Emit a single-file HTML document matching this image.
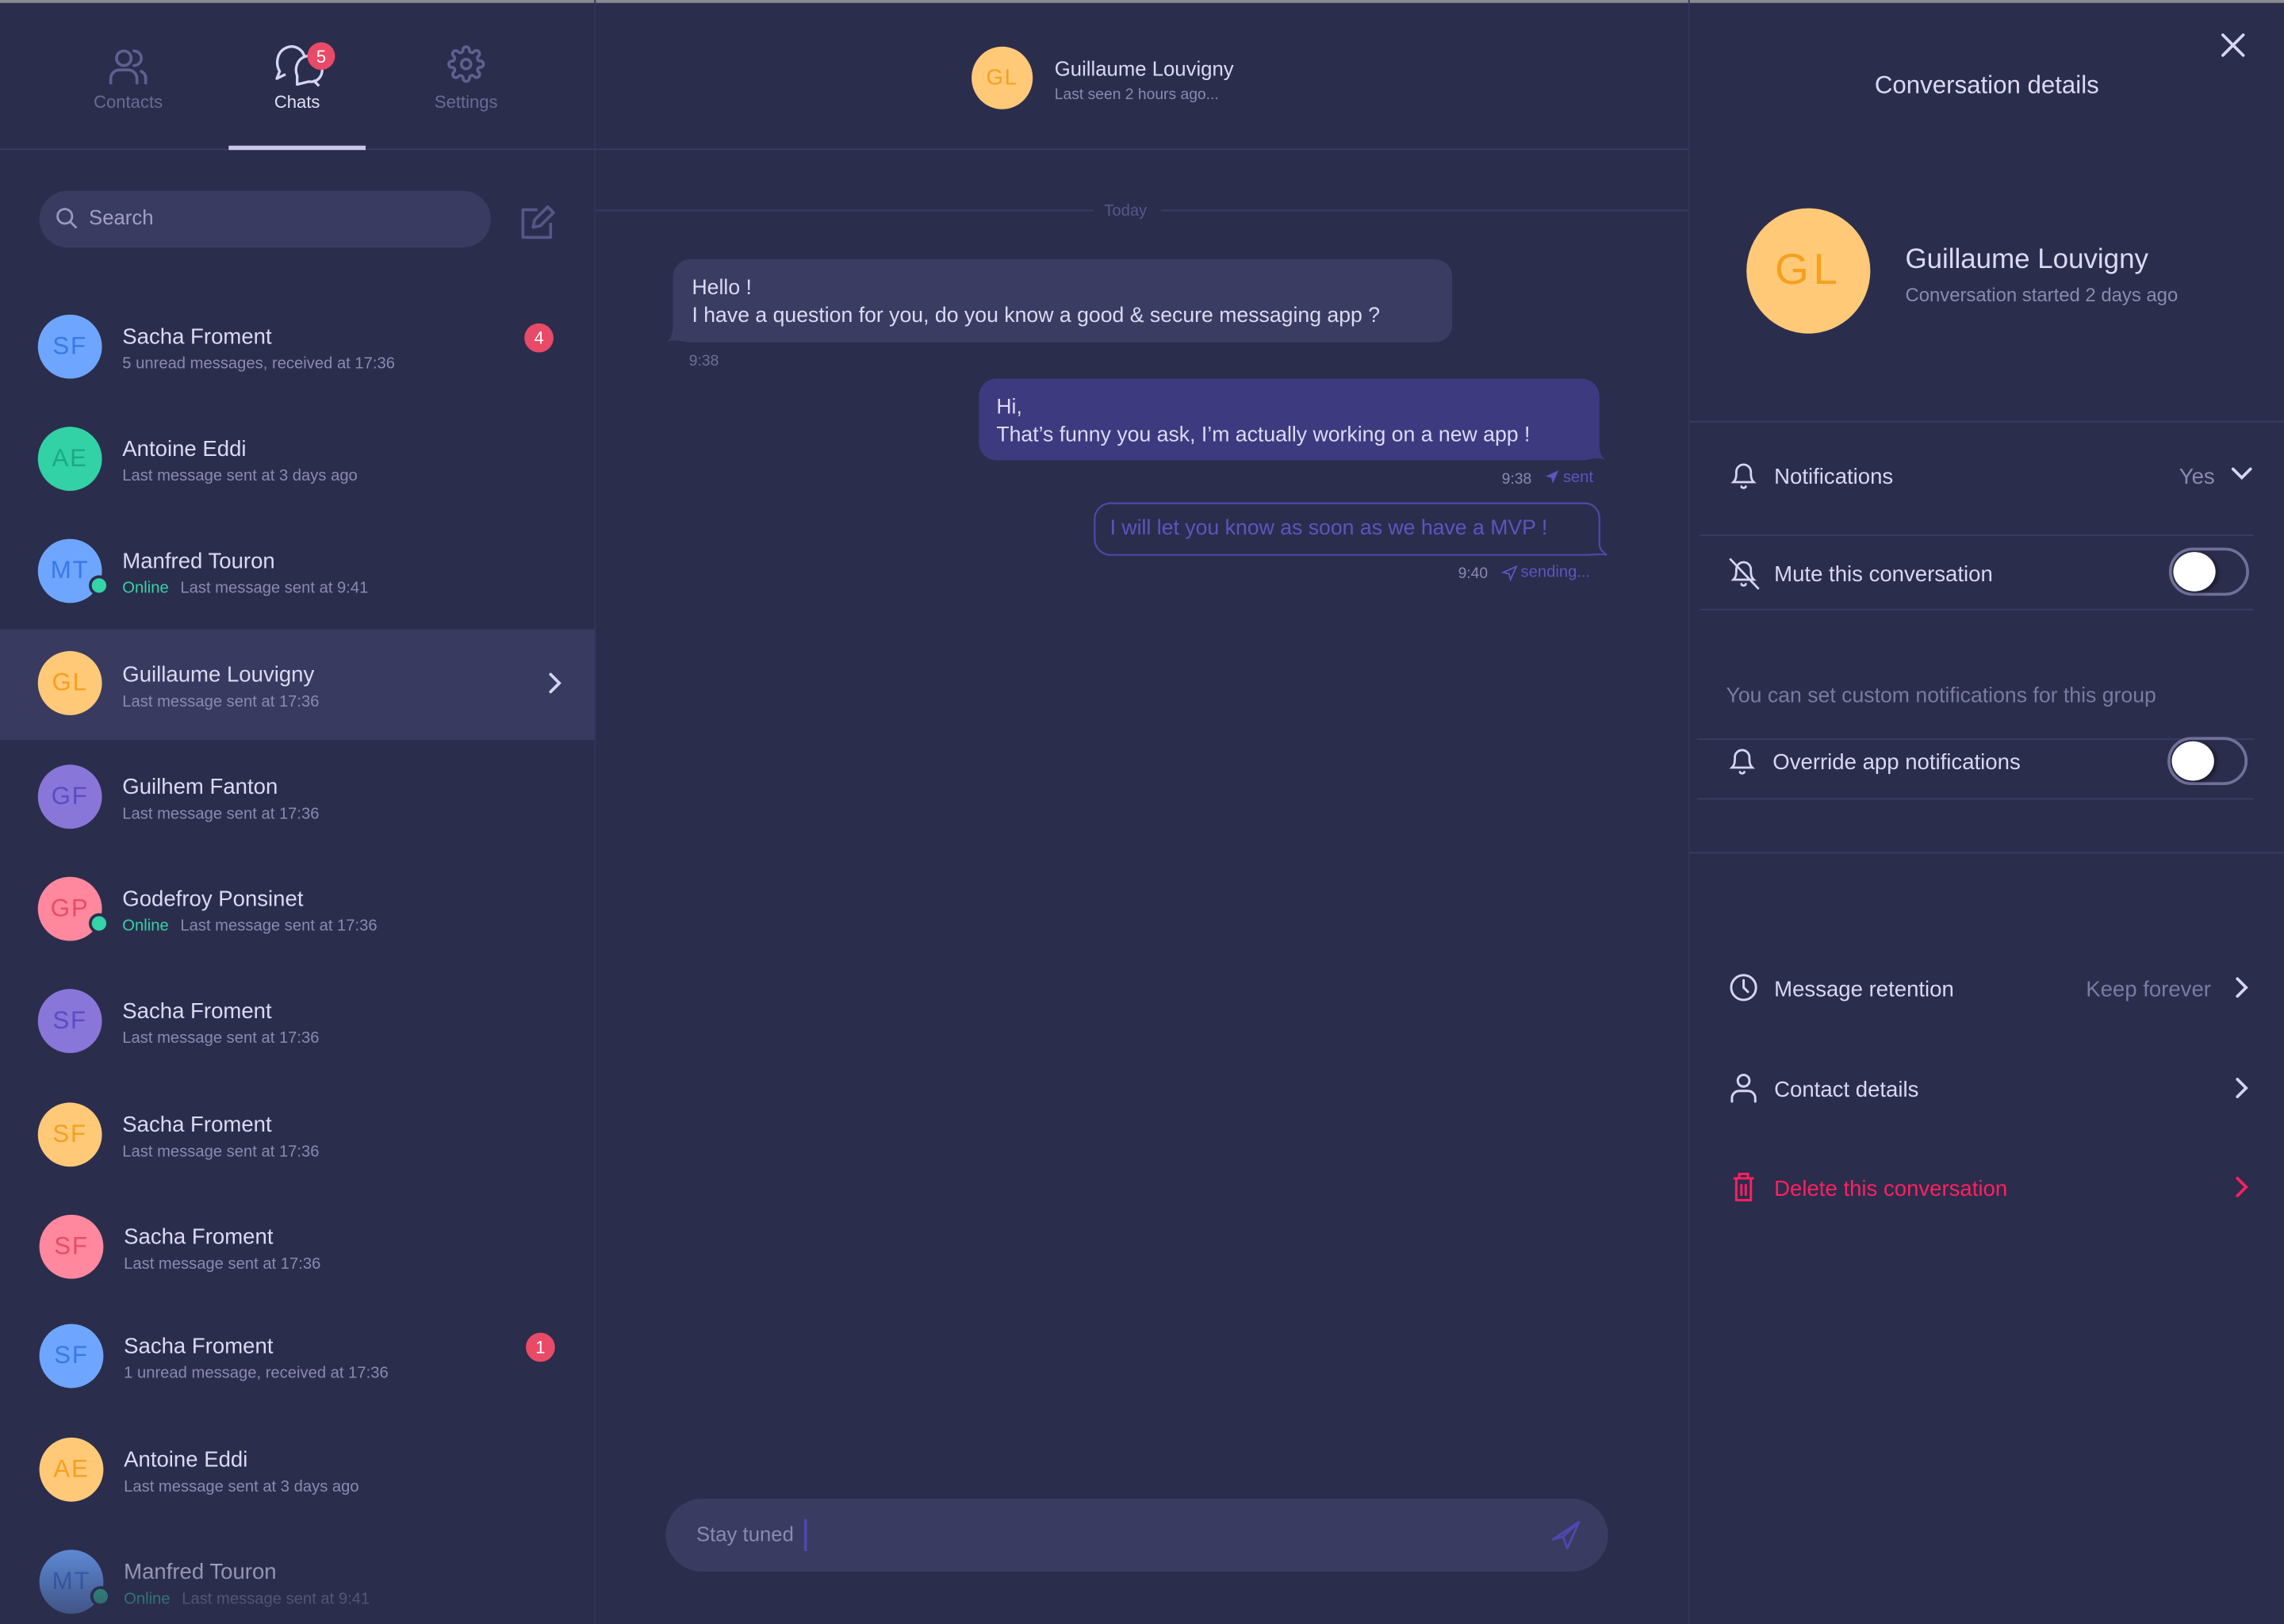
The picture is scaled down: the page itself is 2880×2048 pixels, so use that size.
<!DOCTYPE html>
<html><head><meta charset="utf-8"><style>
*{box-sizing:border-box;margin:0;padding:0}
html,body{width:2880px;height:2048px;overflow:hidden;background:#2b2d4c}
#s{position:absolute;left:0;top:0;width:1568px;height:1115px;transform:scale(1.836735,1.836771);transform-origin:0 0;font-family:"Liberation Sans",sans-serif;color:#d6d6f2;background:#2b2d4c}
.a{position:absolute}
.t{margin-top:2px}
.av{position:absolute;border-radius:50%;display:flex;align-items:center;justify-content:center;font-size:17px;letter-spacing:1px}
.nm{position:absolute;font-size:15px;color:#dadaf4;margin-top:2px}
.sb{position:absolute;font-size:11px;color:#8a8ab0;white-space:nowrap;margin-top:2px}
.on{color:#34d3a8;margin-right:8px}
.dot{position:absolute;width:14px;height:14px;border-radius:50%;background:#34d3a8;border:2px solid #2b2d4c}
.bd{position:absolute;width:20px;height:20px;border-radius:50%;background:#e84a68;color:#fff;font-size:12px;display:flex;align-items:center;justify-content:center}
.ln{position:absolute;height:1px;background:#3a3c63}
.lbl{position:absolute;font-size:15px;color:#d8d8f4;margin-top:2px}
.tg{position:absolute;width:55px;height:33px;border:2px solid #70709a;border-radius:17px}
.tg:after{content:"";position:absolute;left:1px;top:1px;width:29px;height:27px;border-radius:50%;background:#fff;box-shadow:2px 1px 3px rgba(0,0,0,.4)}
svg{position:absolute;overflow:visible}
</style></head><body><div id="s">
<div class="a" style="left:0;top:0;width:1568px;height:2px;background:#8a8a92"></div>
<div class="a" style="left:408px;top:0;width:1px;height:1115px;background:#34365a"></div>
<div class="a" style="left:1159px;top:0;width:1px;height:1115px;background:#34365a"></div>
<div class="ln" style="left:0;top:102px;width:1159px;background:#383a62"></div>

<!-- tabs -->
<svg style="left:74px;top:32px" width="28" height="26" viewBox="0 0 28 26" fill="none" stroke="#5f6090" stroke-width="2" stroke-linecap="round"><circle cx="11" cy="8" r="5"/><path d="M2 25v-3a6 6 0 0 1 6-6h6a6 6 0 0 1 6 6v3"/><path d="M18 3a5 5 0 0 1 0 10M23 17a5 5 0 0 1 3 5v3"/></svg>
<div class="a t" style="left:48px;top:61px;width:80px;text-align:center;font-size:12px;color:#6a6a96">Contacts</div>
<svg style="left:188px;top:30px" width="36" height="30" viewBox="0 0 36 30" fill="none" stroke="#d6d6f2" stroke-width="1.8" stroke-linejoin="round"><path d="M8 21 L2 24 L4 19 C1 14 2 6 8 3 C14 0 20 4 21 9"/><path d="M16 28 L24 26 C30 27 34 22 33 16 C32 10 26 7 21 9 C16 11 14 17 16 22 Z"/><path d="M27 25 L31 29"/></svg>
<div class="bd" style="left:211px;top:29px;width:19px;height:19px;font-size:12px">5</div>
<div class="a t" style="left:164px;top:61px;width:80px;text-align:center;font-size:12px;color:#e0e0f6">Chats</div>
<div class="a" style="left:157px;top:100px;width:94px;height:3px;background:#c8c8ec"></div>
<svg style="left:307px;top:31px" width="26" height="26" viewBox="0 0 24 24" fill="none" stroke="#5f6090" stroke-width="1.8"><circle cx="12" cy="12" r="3"/><path d="M19.4 15a1.7 1.7 0 0 0 .3 1.8l.1.1a2 2 0 1 1-2.8 2.8l-.1-.1a1.7 1.7 0 0 0-1.8-.3 1.7 1.7 0 0 0-1 1.5V21a2 2 0 1 1-4 0v-.1a1.7 1.7 0 0 0-1.1-1.5 1.7 1.7 0 0 0-1.8.3l-.1.1a2 2 0 1 1-2.8-2.8l.1-.1a1.7 1.7 0 0 0 .3-1.8 1.7 1.7 0 0 0-1.5-1H3a2 2 0 1 1 0-4h.1a1.7 1.7 0 0 0 1.5-1.1 1.7 1.7 0 0 0-.3-1.800l-.1-.1a2 2 0 1 1 2.8-2.8l.1.1a1.7 1.7 0 0 0 1.8.3H9a1.7 1.7 0 0 0 1-1.5V3a2 2 0 1 1 4 0v.1a1.7 1.7 0 0 0 1 1.5 1.7 1.7 0 0 0 1.8-.3l.1-.1a2 2 0 1 1 2.8 2.8l-.1.1a1.7 1.7 0 0 0-.3 1.8V9a1.7 1.7 0 0 0 1.5 1H21a2 2 0 1 1 0 4h-.1a1.7 1.7 0 0 0-1.5 1z"/></svg>
<div class="a t" style="left:280px;top:61px;width:80px;text-align:center;font-size:12px;color:#6a6a96">Settings</div>

<!-- search -->
<div class="a" style="left:27px;top:131px;width:310px;height:39px;border-radius:20px;background:#3a3b60"></div>
<svg style="left:38px;top:142px" width="16" height="16" viewBox="0 0 16 16" fill="none" stroke="#9a9ac0" stroke-width="1.5"><circle cx="6.5" cy="6.5" r="5"/><path d="M10.5 10.5L14.5 14.5"/></svg>
<div class="a" style="left:61px;top:141px;font-size:14px;color:#a0a0c4">Search</div>
<svg style="left:357px;top:140px" width="25" height="25" viewBox="0 0 25 25" fill="none" stroke="#55578a" stroke-width="2" stroke-linejoin="round"><path d="M12 4H2v19h19V13"/><path d="M9 16l1-5L19 2l4 4-9 9z"/></svg>

<!-- rows -->
<div class="a" style="left:0;top:432px;width:408px;height:76px;background:#393a60"></div>

<div class="av" style="left:26px;top:216px;width:44px;height:44px;background:#6ea6ff;color:#3a78e6">SF</div>
<div class="nm" style="left:84px;top:221px">Sacha Froment</div><div class="sb" style="left:84px;top:242px">5 unread messages, received at 17:36</div>
<div class="bd" style="left:360px;top:222px">4</div>

<div class="av" style="left:26px;top:293px;width:44px;height:44px;background:#32d2a6;color:#1ea884">AE</div>
<div class="nm" style="left:84px;top:298px">Antoine Eddi</div><div class="sb" style="left:84px;top:319px">Last message sent at 3 days ago</div>

<div class="av" style="left:26px;top:370px;width:44px;height:44px;background:#6ea6ff;color:#3a78e6">MT</div><div class="dot" style="left:61px;top:395px"></div>
<div class="nm" style="left:84px;top:375px">Manfred Touron</div><div class="sb" style="left:84px;top:396px"><span class="on">Online</span>Last message sent at 9:41</div>

<div class="av" style="left:26px;top:447px;width:44px;height:44px;background:#ffc978;color:#f5a01e">GL</div>
<div class="nm" style="left:84px;top:453px">Guillaume Louvigny</div><div class="sb" style="left:84px;top:474px">Last message sent at 17:36</div>
<svg style="left:376px;top:461px" width="10" height="16" viewBox="0 0 10 16" fill="none" stroke="#d6d6f2" stroke-width="2" stroke-linecap="round"><path d="M2 2l6 6-6 6"/></svg>

<div class="av" style="left:26px;top:525px;width:44px;height:44px;background:#8877d8;color:#5a4cc6">GF</div>
<div class="nm" style="left:84px;top:530px">Guilhem Fanton</div><div class="sb" style="left:84px;top:551px">Last message sent at 17:36</div>

<div class="av" style="left:26px;top:602px;width:44px;height:44px;background:#ff889e;color:#e84c68">GP</div><div class="dot" style="left:61px;top:627px"></div>
<div class="nm" style="left:84px;top:607px">Godefroy Ponsinet</div><div class="sb" style="left:84px;top:628px"><span class="on">Online</span>Last message sent at 17:36</div>

<div class="av" style="left:26px;top:679px;width:44px;height:44px;background:#8877d8;color:#5a4cc6">SF</div>
<div class="nm" style="left:84px;top:684px">Sacha Froment</div><div class="sb" style="left:84px;top:705px">Last message sent at 17:36</div>

<div class="av" style="left:26px;top:757px;width:44px;height:44px;background:#ffc978;color:#f5a01e">SF</div>
<div class="nm" style="left:84px;top:762px">Sacha Froment</div><div class="sb" style="left:84px;top:783px">Last message sent at 17:36</div>

<div class="av" style="left:27px;top:834px;width:44px;height:44px;background:#ff889e;color:#e84c68">SF</div>
<div class="nm" style="left:85px;top:839px">Sacha Froment</div><div class="sb" style="left:85px;top:860px">Last message sent at 17:36</div>

<div class="av" style="left:27px;top:909px;width:44px;height:44px;background:#6ea6ff;color:#3a78e6">SF</div>
<div class="nm" style="left:85px;top:914px">Sacha Froment</div><div class="sb" style="left:85px;top:935px">1 unread message, received at 17:36</div>
<div class="bd" style="left:361px;top:915px">1</div>

<div class="av" style="left:27px;top:987px;width:44px;height:44px;background:#ffc978;color:#f5a01e">AE</div>
<div class="nm" style="left:85px;top:992px">Antoine Eddi</div><div class="sb" style="left:85px;top:1013px">Last message sent at 3 days ago</div>

<div class="av" style="left:27px;top:1064px;width:44px;height:44px;background:#6ea6ff;color:#3a78e6">MT</div><div class="dot" style="left:62px;top:1089px"></div>
<div class="nm" style="left:85px;top:1069px">Manfred Touron</div><div class="sb" style="left:85px;top:1090px"><span class="on">Online</span>Last message sent at 9:41</div>
<div class="a" style="left:0;top:1040px;width:408px;height:75px;background:linear-gradient(rgba(43,45,76,0),rgba(43,45,76,.75))"></div>

<!-- middle header -->
<div class="av" style="left:667px;top:32px;width:42px;height:43px;background:#ffc978;color:#f5a01e;font-size:15px">GL</div>
<div class="a t" style="left:724px;top:37px;font-size:14px;color:#dadaf4">Guillaume Louvigny</div>
<div class="a t" style="left:724px;top:57px;font-size:10.5px;color:#8a8ab0">Last seen 2 hours ago...</div>
<div class="ln" style="left:409px;top:144px;width:342px"></div>
<div class="ln" style="left:797px;top:144px;width:362px"></div>
<div class="a t" style="left:758px;top:137px;font-size:11px;color:#55578a">Today</div>

<!-- bubbles -->
<svg style="left:456px;top:178px" width="542" height="58" viewBox="0 0 542 58"><path d="M18 0H529a12 12 0 0 1 12 12V45a12 12 0 0 1-12 12H18C12 57 8 54 2 57 6 52 6 48 6 44V12A12 12 0 0 1 18 0z" fill="#3b3c62"/></svg>
<div class="a t" style="left:475px;top:187px;font-size:14.5px;line-height:19px;color:#dadaf4">Hello !<br>I have a question for you, do you know a good &amp; secure messaging app ?</div>
<div class="a t" style="left:473px;top:240px;font-size:10.5px;color:#6e6e96">9:38</div>

<svg style="left:672px;top:260px" width="432" height="57" viewBox="0 0 432 57"><path d="M12 0H414a12 12 0 0 1 12 12V44c0 4 0 8 4 12-6-3-10 0-16 0H12A12 12 0 0 1 0 44V12A12 12 0 0 1 12 0z" fill="#3e3a80"/></svg>
<div class="a t" style="left:684px;top:269px;font-size:14.5px;line-height:19px;color:#dadaf4">Hi,<br>That’s funny you ask, I’m actually working on a new app !</div>
<div class="a t" style="left:1031px;top:321px;font-size:10.5px;color:#8a8ab0">9:38</div>
<svg style="left:1060px;top:322px" width="11" height="11" viewBox="0 0 11 11"><path d="M10 1L1 5l4 1 1 4z" fill="#5b55c0"/></svg>
<div class="a t" style="left:1073px;top:320px;font-size:11px;color:#5b55c0">sent</div>

<svg style="left:751px;top:345px" width="354" height="37" viewBox="0 0 354 37" fill="none"><path d="M12 .5H337a10 10 0 0 1 10 10V28c0 3 1 5 5 8-5-1-9 0-14 0H12A11 11 0 0 1 .5 25V12A11 11 0 0 1 12 .5z" stroke="#4f48a8" stroke-width="1.2"/></svg>
<div class="a t" style="left:762px;top:353px;font-size:14.5px;color:#5b55c0">I will let you know as soon as we have a MVP !</div>
<div class="a t" style="left:1001px;top:386px;font-size:10.5px;color:#8a8ab0">9:40</div>
<svg style="left:1031px;top:388px" width="11" height="11" viewBox="0 0 11 11" fill="none" stroke="#5b55c0"><path d="M10 1L1 5l4 1 1 4z"/></svg>
<div class="a t" style="left:1044px;top:385px;font-size:11px;color:#5b55c0">sending...</div>

<!-- input -->
<div class="a" style="left:457px;top:1029px;width:647px;height:50px;border-radius:25px;background:#3a3b60"></div>
<div class="a" style="left:478px;top:1045px;font-size:14px;color:#8a8ab0">Stay tuned</div>
<div class="a" style="left:552px;top:1043px;width:2px;height:22px;background:#4f48b0"></div>
<svg style="left:1065px;top:1044px" width="20" height="20" viewBox="0 0 20 20" fill="none" stroke="#4f48b0" stroke-width="1.5" stroke-linejoin="round"><path d="M19 1L1 13l7-2 3 8z"/><path d="M8 11L19 1"/></svg>

<!-- right panel -->
<svg style="left:1525px;top:23px" width="16" height="16" viewBox="0 0 16 16" stroke="#d6d6f2" stroke-width="2" stroke-linecap="round"><path d="M1 1l14 14M15 1L1 15"/></svg>
<div class="a" style="left:1160px;top:49px;width:408px;text-align:center;font-size:17px;color:#dadaf4">Conversation details</div>
<div class="av" style="left:1199px;top:143px;width:85px;height:86px;background:#ffc978;color:#f5a01e;font-size:30px;letter-spacing:3px">GL</div>
<div class="a" style="left:1308px;top:168px;font-size:19px;color:#dadaf4">Guillaume Louvigny</div>
<div class="a" style="left:1308px;top:195px;font-size:13px;color:#8a8ab0">Conversation started 2 days ago</div>
<div class="ln" style="left:1160px;top:289px;width:408px"></div>

<svg style="left:1187px;top:316px" width="20" height="20" viewBox="0 0 20 20" fill="none" stroke="#d6d6f2" stroke-width="1.5" stroke-linecap="round"><path d="M3 15h14c-2-2-2-4-2-7a5 5 0 0 0-10 0c0 3 0 5-2 7z"/><path d="M8.5 18a1.5 1 0 0 0 3 0"/></svg>
<div class="lbl" style="left:1218px;top:317px">Notifications</div>
<div class="a t" style="left:1496px;top:317px;font-size:15px;color:#8a8ab0">Yes</div>
<svg style="left:1532px;top:321px" width="14" height="9" viewBox="0 0 14 9" fill="none" stroke="#d6d6f2" stroke-width="2" stroke-linecap="round"><path d="M1 1l6 6 6-6"/></svg>
<div class="ln" style="left:1167px;top:367px;width:380px"></div>

<svg style="left:1187px;top:383px" width="20" height="22" viewBox="0 0 20 22" fill="none" stroke="#d6d6f2" stroke-width="1.5" stroke-linecap="round"><path d="M3 15h14c-2-2-2-4-2-7a5 5 0 0 0-10 0c0 3 0 5-2 7z"/><path d="M8.5 18a1.5 1 0 0 0 3 0"/><path d="M1 1l19 20"/></svg>
<div class="lbl" style="left:1218px;top:384px">Mute this conversation</div>
<div class="tg" style="left:1489px;top:376px"></div>
<div class="ln" style="left:1167px;top:418px;width:380px"></div>

<div class="a t" style="left:1185px;top:468px;font-size:14.5px;color:#7a7aa2">You can set custom notifications for this group</div>
<div class="ln" style="left:1165px;top:507px;width:382px"></div>
<svg style="left:1186px;top:512px" width="20" height="20" viewBox="0 0 20 20" fill="none" stroke="#d6d6f2" stroke-width="1.5" stroke-linecap="round"><path d="M3 15h14c-2-2-2-4-2-7a5 5 0 0 0-10 0c0 3 0 5-2 7z"/><path d="M8.5 18a1.5 1 0 0 0 3 0"/></svg>
<div class="lbl" style="left:1217px;top:513px">Override app notifications</div>
<div class="tg" style="left:1488px;top:506px"></div>
<div class="ln" style="left:1165px;top:548px;width:382px"></div>
<div class="ln" style="left:1160px;top:585px;width:408px"></div>

<svg style="left:1187px;top:668px" width="20" height="20" viewBox="0 0 20 20" fill="none" stroke="#d6d6f2" stroke-width="1.6" stroke-linecap="round"><circle cx="10" cy="10" r="8.5"/><path d="M10 5v5l3 3"/></svg>
<div class="lbl" style="left:1218px;top:669px">Message retention</div>
<div class="a t" style="left:1432px;top:669px;font-size:15px;color:#7a7aa2">Keep forever</div>
<svg style="left:1534px;top:670px" width="10" height="16" viewBox="0 0 10 16" fill="none" stroke="#d6d6f2" stroke-width="2" stroke-linecap="round"><path d="M2 2l6 6-6 6"/></svg>

<svg style="left:1188px;top:737px" width="18" height="20" viewBox="0 0 18 20" fill="none" stroke="#d6d6f2" stroke-width="1.6"><circle cx="9" cy="5" r="4"/><path d="M1 20v-3a5 5 0 0 1 5-5h6a5 5 0 0 1 5 5v3"/></svg>
<div class="lbl" style="left:1218px;top:738px">Contact details</div>
<svg style="left:1534px;top:739px" width="10" height="16" viewBox="0 0 10 16" fill="none" stroke="#d6d6f2" stroke-width="2" stroke-linecap="round"><path d="M2 2l6 6-6 6"/></svg>

<svg style="left:1189px;top:805px" width="16" height="20" viewBox="0 0 16 20" fill="none" stroke="#ff2060" stroke-width="1.6"><path d="M1 4h14M5 4V1h6v3M3 4v15h10V4M6.5 8v8M9.5 8v8"/></svg>
<div class="lbl" style="left:1218px;top:806px;color:#ff2060">Delete this conversation</div>
<svg style="left:1534px;top:807px" width="10" height="16" viewBox="0 0 10 16" fill="none" stroke="#ff2060" stroke-width="2" stroke-linecap="round"><path d="M2 2l6 6-6 6"/></svg>
</div></body></html>
